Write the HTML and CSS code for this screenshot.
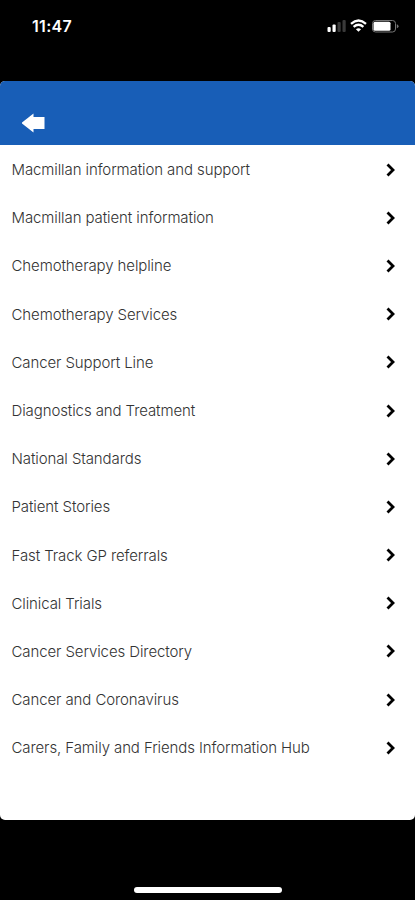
FILE: index.html
```html
<!DOCTYPE html>
<html lang="en">

<head>
  <meta charset="UTF-8">
  <meta name="viewport" content="width=device-width, initial-scale=1.0">
  <title>Cancer Services</title>
  <link rel="stylesheet" href="styles.css">
</head>

<body>

  <div class="status-bar">
    <span class="time">11:47</span>
    <svg class="status-icons" width="72" height="16" viewBox="0 0 72 16">
      <!-- signal -->
      <rect x="0.500" y="9" width="3.2" height="5" rx="1" fill="#fff" />
      <rect x="5.500" y="6.5" width="3.2" height="7.5" rx="1" fill="#fff" />
      <rect x="10.500" y="4" width="3.2" height="10" rx="1" fill="#3a3a3a" />
      <rect x="15.500" y="2" width="3.2" height="12" rx="1" fill="#3a3a3a" />
      <!-- wifi -->
      <path d="M24 5.8Q31.500 -.8 39 5.800M26.600 8.800Q31.500 4.600 36.400 8.800" fill="none" stroke="#fff" stroke-width="2.300" />
      <path d="M31.500 13.800L28.900 11.200Q31.500 9.200 34.100 11.200Z" fill="#fff" />
      <!-- battery -->
      <rect x="45.500" y="2.500" width="23" height="11.500" rx="3" fill="none" stroke="#777" />
      <rect x="46.500" y="3.800" width="17" height="9" rx="1.500" fill="#fff" />
      <path d="M69.800 6.300v4q1.700-.6 1.700-2t-1.700-2z" fill="#777" />
    </svg>
  </div>

  <div class="screen">
    <div class="header">
      <svg class="back" width="24" height="20" viewBox="0 0 24 20">
        <path d="M-0.500 10L11.500 0.500V4H22.500V16H11.500V19.500Z" fill="#fff" />
      </svg>
    </div>

    <ul class="menu" id="menu"></ul>
  </div>

  <div class="home-bar"></div>

  <script>
    const items = [
      'Macmillan information and support',
      'Macmillan patient information',
      'Chemotherapy helpline',
      'Chemotherapy Services',
      'Cancer Support Line',
      'Diagnostics and Treatment',
      'National Standards',
      'Patient Stories',
      'Fast Track GP referrals',
      'Clinical Trials',
      'Cancer Services Directory',
      'Cancer and Coronavirus',
      'Carers, Family and Friends Information Hub'
    ];

    const arrow = '<svg width="10" height="14" viewBox="0 0 10 14"><path d="M1.500 1.500L7 7L1.500 12.500" fill="none" stroke="#000" stroke-width="2.800"/></svg>';

    document.getElementById('menu').innerHTML = items
      .map(item => '<li class="menu-item"><span>' + item + '</span>' + arrow + '</li>')
      .join('');
  </script>

</body>

</html>
```

FILE: styles.css
```css
body {
  display: flex;
  flex-direction: column;
  height: 900px;
  margin: 0;
  background-color: #000;
  font-family: Inter, "Liberation Sans", sans-serif;
}

.status-bar {
  display: flex;
  justify-content: space-between;
  box-sizing: border-box;
  height: 81px;
  padding: 16px 16px 0 32px;
}

.time {
  color: #fff;
  font-size: 16px;
  font-weight: 600;
  letter-spacing: 0.3px;
  line-height: 20px;
}

.status-icons {
  margin-top: 2px;
}

.screen {
  height: 739px;
  background-color: #fff;
  border-radius: 5px;
  overflow: hidden;
}

.header {
  box-sizing: border-box;
  height: 64px;
  padding: 31.500px 0 0 22px;
  background-color: #185eb7;
}

.back {
  display: block;
}

.menu {
  margin: 0.500px 0 0;
  padding: 0;
  list-style: none;
}

.menu-item {
  display: flex;
  align-items: center;
  justify-content: space-between;
  height: 48.2px;
  padding: 0 19px 0 11.500px;
  color: #333;
  font-size: 15px;
  font-weight: 300;
  letter-spacing: -0.1px;
}

.home-bar {
  width: 148px;
  height: 6px;
  margin: 67px auto 0;
  background-color: #fff;
  border-radius: 3px;
}
```
